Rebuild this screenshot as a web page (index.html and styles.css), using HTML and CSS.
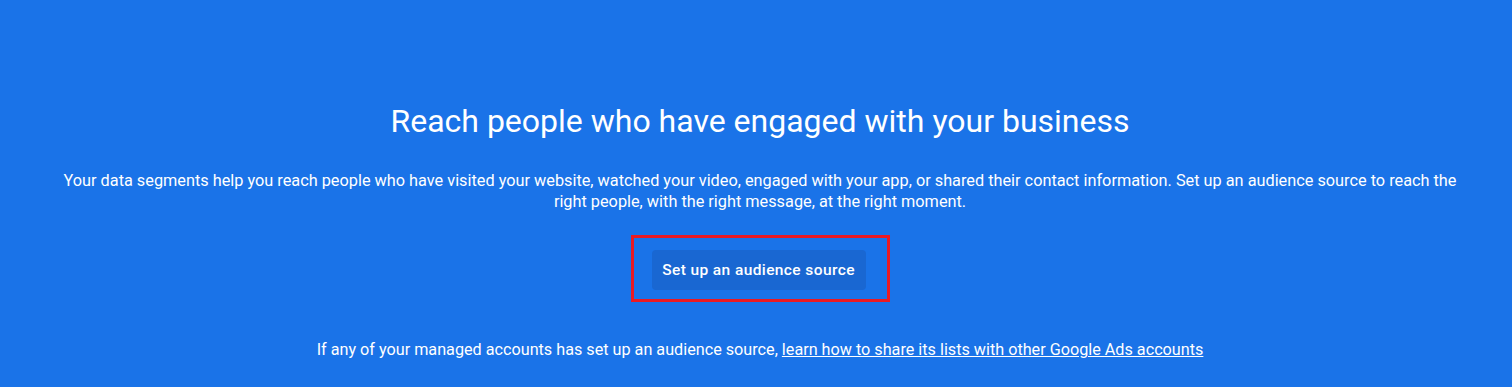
FILE: index.html
```html
<html>
  <head>
    <link rel="stylesheet" href="styles.css">
  </head>
  <body>
    <div class="hero">
      <h1 class="title">Reach people who have engaged with your business</h1>
      <p class="lead">Your data segments help you reach people who have visited your website, watched your video, engaged with your app, or shared their contact information. Set up an audience source to reach the right people, with the right message, at the right moment.</p>
      <div class="highlight">
        <button class="cta">Set up an audience source</button>
      </div>
      <p class="note">If any of your managed accounts has set up an audience source, <a href="#">learn how to share its lists with other Google Ads accounts</a></p>
    </div>
  </body>
</html>
```

FILE: styles.css
```css
html, body {
  margin: 0;
  width: 100%;
  height: 100%;
  background: #1a73e8;
  font-family: 'Roboto', 'Liberation Sans', sans-serif;
  color: #fff;
}

.hero {
  display: flex;
  flex-direction: column;
  align-items: center;
  text-align: center;
  padding: 101px 48px 0 56px;
}

.title {
  margin: 0;
  font-size: 32px;
  font-weight: 400;
  line-height: 40px;
  letter-spacing: 0;
}

.lead {
  margin: 29px 0 0;
  font-size: 16.3px;
  line-height: 21px;
  max-width: 1400px;
}

.highlight {
  margin-top: 23px;
  border: 3px solid #ea1a23;
  padding: 12px 21px 9px 18px;
}

.cta {
  display: block;
  width: 214px;
  height: 40px;
  border: none;
  border-radius: 4px;
  background: #1967d2;
  color: #fff;
  font-family: 'Roboto', 'Liberation Sans', sans-serif;
  font-size: 15.5px;
  font-weight: 500;
  letter-spacing: 0.4px;
}

.note {
  margin: 38px 0 0;
  font-size: 16.2px;
  line-height: 20px;
}

.note a {
  color: #fff;
}
```
